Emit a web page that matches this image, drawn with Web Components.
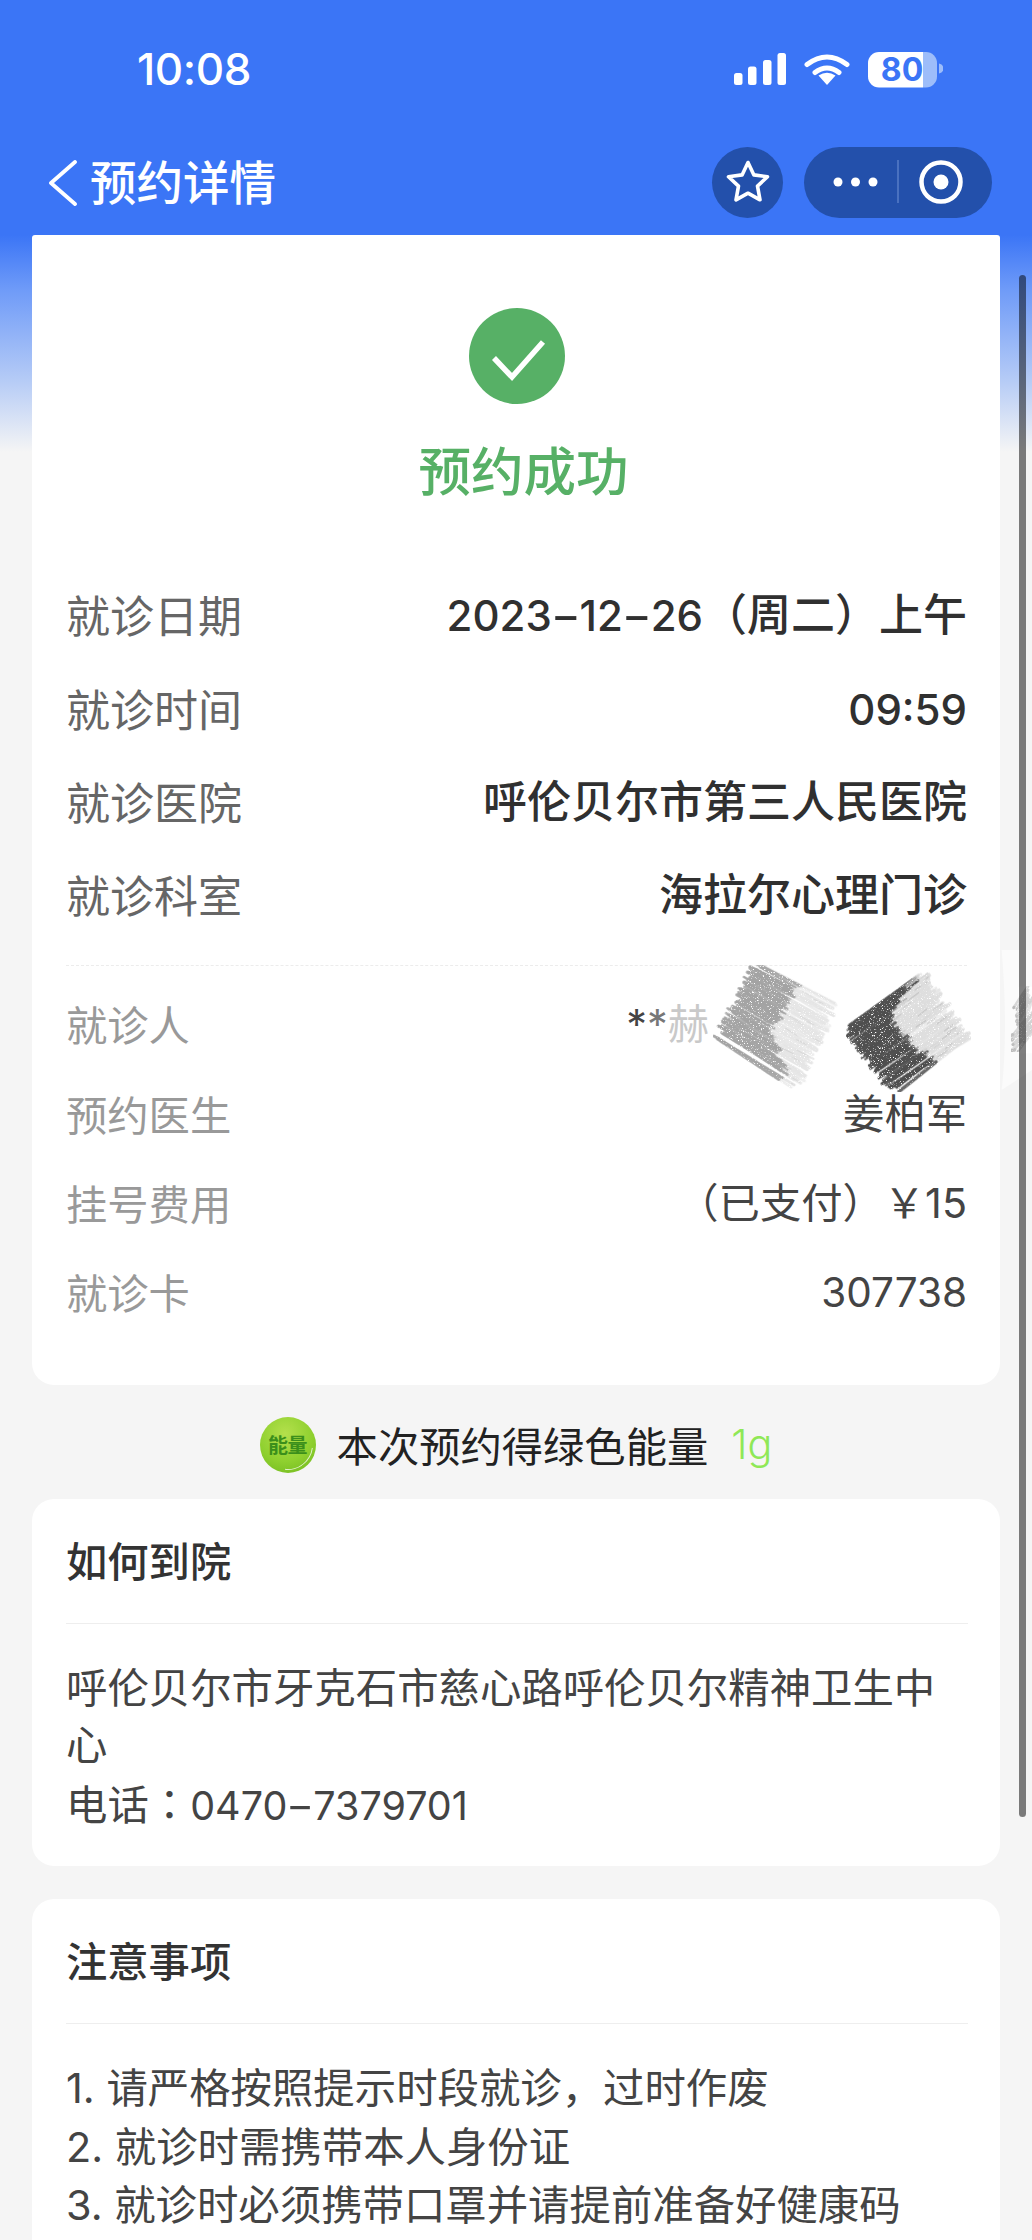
<!DOCTYPE html>
<html lang="zh-CN">
<head>
<meta charset="utf-8">
<title>预约详情</title>
<style>
html,body{margin:0;padding:0;background:#f5f5f5;}
body{width:1032px;height:2240px;overflow:hidden;font-family:Inter,"Noto Sans CJK SC",sans-serif;}
.h{display:inline-block;transform:scaleX(1.55);margin:0 .1em;}
.n{font-size:42px;}
.m{font-size:40.500px;}
.q{font-size:39.500px;}
</style>
</head>
<body>
<app-shell>
  <status-bar slot="head"></status-bar>
  <nav-bar slot="head">预约详情</nav-bar>

  <summary-card>
    <success-mark>预约成功</success-mark>
    <info-row major label="就诊日期"><span class="n">2023<span class="h">-</span>12<span class="h">-</span>26</span>（周二）上午</info-row>
    <info-row major label="就诊时间"><span class="n">09:59</span></info-row>
    <info-row major label="就诊医院">呼伦贝尔市第三人民医院</info-row>
    <info-row major label="就诊科室">海拉尔心理门诊</info-row>
    <dash-line></dash-line>
    <info-row label="就诊人" reserve="258"><span>*</span><span style="color:#777">*</span><span style="color:#c9c9c9">赫</span></info-row>
    <info-row label="预约医生">姜柏军</info-row>
    <info-row label="挂号费用">（已支付）￥15</info-row>
    <info-row label="就诊卡"><span class="m">307738</span></info-row>
  </summary-card>

  <energy-line amount="1g">本次预约得绿色能量</energy-line>

  <section-card heading="如何到院">
    <div>呼伦贝尔市牙克石市慈心路呼伦贝尔精神卫生中心</div>
    <div>电话<span lang="zh-TW" style="font-family:'Noto Sans CJK TC',sans-serif">：</span><span class="q">0470<span class="h">-</span>7379701</span></div>
  </section-card>

  <section-card heading="注意事项" list>
    <div>1. 请严格按照提示时段就诊，过时作废</div>
    <div>2. 就诊时需携带本人身份证</div>
    <div>3. 就诊时必须携带口罩并请提前准备好健康码</div>
  </section-card>

  <scribble-mask slot="over"></scribble-mask>
  <scroll-thumb slot="over"></scroll-thumb>
</app-shell>

<script>
const FONT = 'Inter,"Noto Sans CJK SC",sans-serif';
function shell(el, html){ el.attachShadow({mode:'open'}).innerHTML = html; }

class AppShell extends HTMLElement{
  constructor(){super();shell(this,`<style>
    :host{display:block;position:relative;width:1032px;height:2240px;overflow:hidden;font-family:${FONT};
      background:linear-gradient(#3b75f6 0,#3b75f6 235px,#6f9bf8 290px,#b5cbf6 380px,#f5f5f5 452px,#f5f5f5 100%);}
    header{height:235px;background:#3b75f6;display:flex;flex-direction:column;}
  </style><header><slot name="head"></slot></header><main><slot></slot></main><slot name="over"></slot>`);}
}
class StatusBar extends HTMLElement{
  constructor(){super();shell(this,`<style>
    :host{display:flex;height:147px;box-sizing:border-box;padding:47px 89px 0 137px;justify-content:space-between;align-items:flex-start;color:#fff;}
    .t{font:500 44px/44px Inter,sans-serif;letter-spacing:-.4px;}
    svg{display:block}
  </style><div class="t">10:08</div>
  <svg width="209" height="38" viewBox="734 50 209 38" role="img" aria-label="信号 无线 电量" style="margin-top:3px">
    <g fill="#fff">
      <rect x="734" y="73" width="8.5" height="12" rx="2.5"/>
      <rect x="748" y="66.500" width="8.5" height="18.500" rx="2.500"/>
      <rect x="763" y="60" width="8.500" height="25" rx="2.500"/>
      <rect x="777.500" y="53" width="8.500" height="32" rx="2.500"/>
      <path d="M827 85l-8.500-9.500q8.500-5.500 17 0z"/>
    </g>
    <g fill="none" stroke="#fff" stroke-width="5" stroke-linecap="round">
      <path d="M807 64.500q20-15 40 0"/>
      <path d="M815 72.500q12-9 24 0"/>
    </g>
    <defs><clipPath id="b"><rect x="868" y="52" width="69" height="35.500" rx="11"/></clipPath></defs>
    <g clip-path="url(#b)"><rect x="868" y="52" width="55" height="36" fill="#fff"/><rect x="923" y="52" width="14" height="36" fill="#9dbdfa"/></g>
    <path d="M939 63.500q4.500 1 4.500 5t-4.500 5z" fill="#9dbdfa"/>
    <text x="902" y="81" text-anchor="middle" font-family="Inter,sans-serif" font-weight="700" font-size="32" fill="#3b75f6">80</text>
  </svg>`);}
}
class NavBar extends HTMLElement{
  constructor(){super();shell(this,`<style>
    :host{display:flex;height:88px;box-sizing:border-box;align-items:flex-start;padding-left:47px;padding-right:40px;color:#fff;}
    .back{display:flex;align-items:center;height:71px;flex:1;gap:11px;font:500 46.500px/71px "Noto Sans CJK SC",sans-serif;}
    .back span{position:relative;top:-3px;}
    svg{display:block;flex:none}
    .b{width:71px;height:71px;border-radius:50%;background:#2350ab;margin-right:21px;display:flex;align-items:center;justify-content:center;}
    .p{width:188px;height:71px;border-radius:36px;background:#2350ab;display:flex;align-items:center;}
  </style>
  <div class="back"><svg width="32" height="46" viewBox="47 159 32 46"><path d="M75 161L51 182l24 21" fill="none" stroke="#fff" stroke-width="3.800" stroke-linecap="round" stroke-linejoin="round"/></svg><span><slot></slot></span></div>
  <div class="b"><svg width="46" height="46" viewBox="-23 -23 46 46"><path d="M0-20.500L5.900-8.100 19.500-6.300 9.500 3.100 12 16.800 0 10.200-12 16.800-9.500 3.100-19.500-6.300-5.900-8.100z" fill="none" stroke="#fff" stroke-width="3.600" stroke-linejoin="round"/></svg></div>
  <div class="p"><svg width="188" height="71" viewBox="804 147 188 71">
    <g fill="#fff"><circle cx="838" cy="182" r="4.500"/><circle cx="855.500" cy="182" r="4.500"/><circle cx="873" cy="182" r="4.500"/><circle cx="941" cy="182" r="7.500"/></g>
    <path d="M898 160v43" stroke="#6488cf" stroke-width="1.200"/>
    <circle cx="941" cy="182" r="19.500" fill="none" stroke="#fff" stroke-width="4.500"/>
  </svg></div>`);}
}
class SummaryCard extends HTMLElement{
  constructor(){super();shell(this,`<style>
    :host{display:block;margin:0 32px;background:#fff;border-radius:3px 3px 22px 22px;box-sizing:border-box;height:1150px;padding:73px 33px 0 34px;}
  </style><slot></slot>`);}
}
class SuccessMark extends HTMLElement{
  constructor(){super();shell(this,`<style>
    :host{display:flex;flex-direction:column;align-items:center;height:261px;color:#57b066;font:500 52.500px/70px "Noto Sans CJK SC",sans-serif;}
    svg{display:block;margin-bottom:29px;}
    div{padding-left:14px;}
  </style><svg width="96" height="96" viewBox="0 0 96 96"><circle cx="48" cy="48" r="48" fill="#57b066"/><path d="M25 50l18 19 31-35" fill="none" stroke="#fff" stroke-width="5.500" stroke-linejoin="miter"/></svg><div><slot></slot></div>`);}
}
class InfoRow extends HTMLElement{
  constructor(){super();
    const major=this.hasAttribute('major');
    const reserve=this.getAttribute('reserve')||0;
    shell(this,`<style>
    :host{display:flex;justify-content:space-between;align-items:center;height:${major?93.4:89.3}px;}
    .l{font:400 ${major?44:41.300}px/1.2 "Noto Sans CJK SC",sans-serif;color:${major?'#666':'#999'};position:relative;top:-1px;}
    .v{font:${major?500:400} ${major?44:41.300}px/1.2 Inter,"Noto Sans CJK SC",sans-serif;color:${major?'#303030':'#444'};padding-right:${reserve}px;white-space:nowrap;}
  </style><span class="l">${this.getAttribute('label')}</span><span class="v"><slot></slot></span>`);}
}
class DashLine extends HTMLElement{
  constructor(){super();shell(this,`<style>:host{display:block;height:1px;margin:22px 0 14px;border-top:1px dashed #ececec;}</style>`);}
}
class EnergyLine extends HTMLElement{
  constructor(){super();shell(this,`<style>
    :host{display:flex;align-items:center;justify-content:center;height:114px;box-sizing:border-box;padding:6px 0 0;gap:21px;color:#222;font:400 41.300px/1.2 "Noto Sans CJK SC",sans-serif;}
    .o{position:relative;width:56px;height:56px;border-radius:50%;background:radial-gradient(circle at 45% 30%,#b4e04c,#8fd02f 55%,#6cb61c);color:#3b8f1b;font:700 20px/56px "Noto Sans CJK SC",sans-serif;text-align:center;letter-spacing:-.5px;flex:none;overflow:hidden;}
    .o::after{content:"";position:absolute;inset:3px;border-radius:50%;border:1.500px solid transparent;border-bottom-color:rgba(255,255,255,.75);transform:rotate(-38deg);}
    .a{color:#8fe857;font:300 41.300px/1.2 Inter,sans-serif;margin-left:2px;}
  </style><span class="o">能量</span><span><slot></slot></span><span class="a">${this.getAttribute('amount')}</span>`);}
}
class SectionCard extends HTMLElement{
  constructor(){super();
    const list=this.hasAttribute('list');
    shell(this,`<style>
    :host{display:block;margin:0 32px 33px;background:#fff;border-radius:22px;box-sizing:border-box;padding:30px 32px 32px 34px;}
    h2{margin:0;font:500 41.300px/60px "Noto Sans CJK SC",sans-serif;color:#333;}
    hr{border:0;border-top:1.500px solid #eee;margin:34px 0 ${list?35:36}px;}
    .b{font:400 41.400px/${list?58.500:56.800}px Inter,"Noto Sans CJK SC",sans-serif;color:#444;width:905px;}
  </style><h2>${this.getAttribute('heading')}</h2><hr><div class="b"><slot></slot></div>`);}
}
class ScrollThumb extends HTMLElement{
  constructor(){super();shell(this,`<style>
    :host{position:absolute;left:1019px;top:275px;width:7px;height:1542px;border-radius:4px;background:rgba(0,0,0,.5);}
  </style>`);}
}
class ScribbleMask extends HTMLElement{
  constructor(){super();
    let s=20231226; const r=()=>(s=(s*1664525+1013904223)>>>0)/4294967296;
    const seg=(a,b,f0,f1,col,w,op)=>{
      const x0=a[0]+(b[0]-a[0])*f0,y0=a[1]+(b[1]-a[1])*f0,x1=a[0]+(b[0]-a[0])*f1,y1=a[1]+(b[1]-a[1])*f1;
      return `<path d="M${x0.toFixed(1)} ${y0.toFixed(1)}L${x1.toFixed(1)} ${y1.toFixed(1)}" stroke="${col}" stroke-width="${w.toFixed(1)}" opacity="${op.toFixed(2)}" stroke-dasharray="${(20+r()*70).toFixed(0)} ${(1+r()*6).toFixed(0)}"/>`;
    };
    const patch=(A,B,D,C,n,split,dark,light)=>{
      let o='';
      for(let i=0;i<n;i++){
        const t=i/(n-1);
        const a=[A[0]+(D[0]-A[0])*t+(r()-.5)*40,A[1]+(D[1]-A[1])*t+(r()-.5)*14];
        const b=[B[0]+(C[0]-B[0])*t+(r()-.5)*40,B[1]+(C[1]-B[1])*t+(r()-.5)*14];
        const f=Math.max(.02,split(t)+(r()-.5)*.06);
        o+=seg(a,b,f,1,light,6+r()*7,.55+r()*.45);
        o+=seg(a,b,0,f,dark,6+r()*6,.8+r()*.2);
        if(r()<.5){const g=f+r()*(1-f)*.8;o+=seg(a,b,g,Math.min(1,g+.05+r()*.12),dark,1.500,.5);}
      }
      return o;
    };
    const p1=patch([470,105],[700,225],[360,320],[585,465],80,t=>t<.55?.52-.1*t:.3+.9*(t-.55)+.14,'#a4a4a4','#e6e6e6');
    const p2=patch([735,290],[962,130],[880,480],[1100,330],80,t=>t<.25?.95-1.9*t:t<.7?.47:.47+.3*(t-.7),'#505050','#dedede');
    const edge=patch([1252,230],[1296,170],[1252,370],[1296,310],22,t=>0,'#bbb','#d2d2d2');
    shell(this,`<style>
      :host{position:absolute;left:700px;top:950px;width:332px;height:160px;pointer-events:none;}
      svg{display:block}
    </style><svg width="332" height="160" viewBox="300 60 996 480" fill="none" stroke-linecap="round" aria-hidden="true">
      <defs><filter id="g" x="0" y="0" width="100%" height="100%">
        <feTurbulence type="fractalNoise" baseFrequency=".3 .45" numOctaves="2" seed="7" result="n"/>
        <feColorMatrix in="n" type="matrix" values="0 0 0 0 0  0 0 0 0 0  0 0 0 0 0  0 0 0 -6 4.700" result="m"/>
        <feComposite in="SourceGraphic" in2="m" operator="in"/>
      </filter></defs>
      <path d="M1205 60L1296 10V420L1205 480Q1225 300 1205 60z" fill="#fbfbfb"/>
      <g filter="url(#g)">${p1}${p2}</g><path d="M1255 170h41v200h-41z" fill="#fff"/><g filter="url(#g)">${edge}</g></svg>`);}
}
customElements.define('app-shell',AppShell);
customElements.define('status-bar',StatusBar);
customElements.define('nav-bar',NavBar);
customElements.define('summary-card',SummaryCard);
customElements.define('success-mark',SuccessMark);
customElements.define('info-row',InfoRow);
customElements.define('dash-line',DashLine);
customElements.define('energy-line',EnergyLine);
customElements.define('section-card',SectionCard);
customElements.define('scroll-thumb',ScrollThumb);
customElements.define('scribble-mask',ScribbleMask);
</script>
</body>
</html>
